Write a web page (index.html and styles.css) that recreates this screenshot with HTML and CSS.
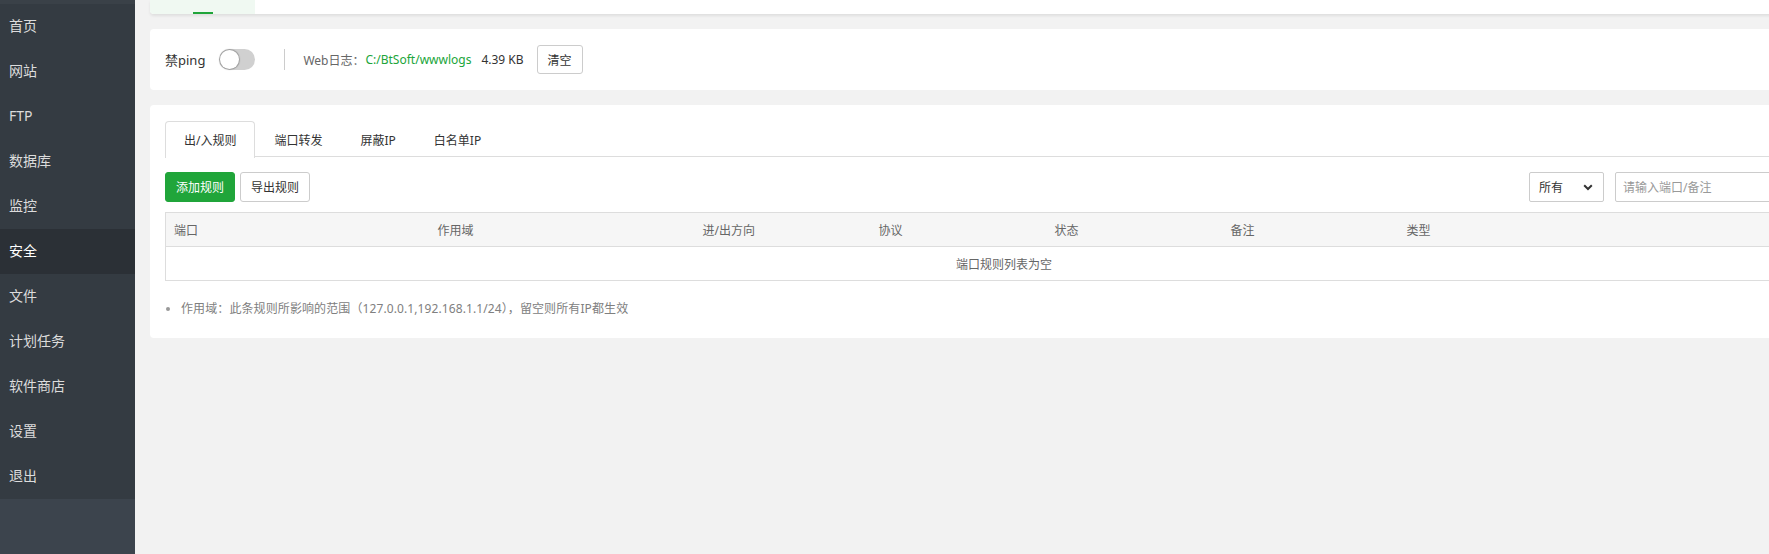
FILE: index.html
```html
<!DOCTYPE html>
<html lang="zh-CN">
<head>
<meta charset="utf-8">
<title>安全</title>
<link rel="stylesheet" href="styles.css">
</head>
<body>
<div class="app">
  <aside class="sidebar">
    <div class="sidebar-top"></div>
    <ul class="menu">
      <li class="menu-item">首页</li>
      <li class="menu-item">网站</li>
      <li class="menu-item">FTP</li>
      <li class="menu-item">数据库</li>
      <li class="menu-item">监控</li>
      <li class="menu-item active">安全</li>
      <li class="menu-item">文件</li>
      <li class="menu-item">计划任务</li>
      <li class="menu-item">软件商店</li>
      <li class="menu-item">设置</li>
      <li class="menu-item">退出</li>
    </ul>
  </aside>
  <main class="main">
    <div class="top-card">
      <div class="top-tab"><span class="top-tab-line"></span></div>
    </div>

    <section class="card ping-card">
      <span class="ping-label">禁ping</span>
      <span class="toggle"><span class="toggle-knob"></span></span>
      <span class="divider"></span>
      <span class="log-label">Web日志：</span>
      <span class="log-path">C:/BtSoft/wwwlogs</span>
      <span class="log-size">4.39 KB</span>
      <button class="btn btn-default btn-clear">清空</button>
    </section>

    <section class="card rules-card">
      <div class="tabs">
        <div class="tab active">出/入规则</div>
        <div class="tab">端口转发</div>
        <div class="tab">屏蔽IP</div>
        <div class="tab">白名单IP</div>
      </div>
      <div class="toolbar">
        <div class="toolbar-left">
          <button class="btn btn-success">添加规则</button>
          <button class="btn btn-default">导出规则</button>
        </div>
        <div class="toolbar-right">
          <div class="select">
            <span>所有</span>
            <svg class="chev" width="10" height="7" viewBox="0 0 10 7"><path d="M1.2 1.3 L5 5 L8.8 1.3" fill="none" stroke="#333" stroke-width="2"/></svg>
          </div>
          <input class="search" type="text" placeholder="请输入端口/备注">
        </div>
      </div>
      <table class="table">
        <colgroup>
          <col class="c-w264"><col class="c-w265"><col class="c-w176"><col class="c-w176"><col class="c-w176"><col class="c-w176"><col class="c-w176"><col class="c-w268">
        </colgroup>
        <thead>
          <tr>
            <th>端口</th><th>作用域</th><th>进/出方向</th><th>协议</th><th>状态</th><th>备注</th><th>类型</th><th></th>
          </tr>
        </thead>
        <tbody>
          <tr><td colspan="8" class="empty">端口规则列表为空</td></tr>
        </tbody>
      </table>
      <ul class="hints">
        <li>作用域：此条规则所影响的范围（127.0.0.1,192.168.1.1/24），留空则所有IP都生效</li>
      </ul>
    </section>
  </main>
</div>
</body>
</html>
```

FILE: styles.css
```css
* { box-sizing: border-box; }
html, body {
  margin: 0;
  padding: 0;
  width: 1769px;
  height: 554px;
  overflow: hidden;
  background: #f2f2f2;
  font-family: "Noto Sans", "Noto Sans CJK SC", sans-serif;
  font-size: 12px;
  color: #333;
}
.app {
  display: flex;
  width: 1872px;
  height: 554px;
}
.sidebar {
  width: 135px;
  flex: none;
  background: #3c444d;
  height: 554px;
}
.sidebar-top {
  height: 4px;
  background: #3a4148;
}
.menu {
  list-style: none;
  margin: 0;
  padding: 0;
  background: #343b42;
}
.menu-item {
  height: 45px;
  line-height: 43px;
  padding-left: 9px;
  font-size: 14px;
  color: #dcdcdc;
}
.menu-item.active {
  background: #2b3036;
  color: #fff;
}
.main {
  flex: 1;
  padding: 0 15px;
}
.top-card {
  height: 14px;
  background: #fff;
  border-radius: 0 0 4px 4px;
  box-shadow: 0 2px 3px rgba(0,0,0,0.08);
  display: flex;
}
.top-tab {
  width: 105px;
  background: #f0f9f2;
  display: flex;
  align-items: flex-end;
  justify-content: center;
  border-bottom-left-radius: 4px;
}
.top-tab-line {
  width: 20px;
  height: 2px;
  background: #20a53a;
}
.card {
  background: #fff;
  border-radius: 4px;
  margin-top: 15px;
}
.ping-card {
  height: 61px;
  padding: 0 15px;
  display: flex;
  align-items: center;
}
.ping-label {
  font-size: 13px;
  color: #333;
}
.toggle {
  width: 36px;
  height: 21px;
  border-radius: 11px;
  background: #d0d0d0;
  margin-left: 14px;
  display: flex;
  align-items: center;
  padding-left: 1px;
}
.toggle-knob {
  width: 19px;
  height: 19px;
  border-radius: 50%;
  background: #fff;
  box-shadow: 0 0 1px 1px rgba(0,0,0,0.25);
}
.divider {
  width: 1px;
  height: 21px;
  background: #ccc;
  margin: 0 18px 0 29px;
}
.log-label { color: #666; }
.log-path { color: #20a53a; margin-left: 1px; }
.log-size { color: #333; margin-left: 10px; }
.btn {
  height: 30px;
  padding: 0 13px;
  font-family: inherit;
  font-size: 12px;
  border-radius: 3px;
  border: 1px solid #ccc;
  background: #fff;
  color: #333;
  cursor: pointer;
}
.btn-clear {
  margin-left: 13px;
  height: 29px;
  padding: 0 10px;
}
.btn-success {
  background: #20a53a;
  border-color: #20a53a;
  color: #fff;
}
.rules-card {
  padding: 16px 15px 19px;
}
.tabs {
  display: flex;
  height: 36px;
  border-bottom: 1px solid #ddd;
}
.tab {
  height: 36px;
  padding: 2px 18px 0;
  line-height: 33px;
  border: 1px solid transparent;
  border-bottom: none;
  color: #333;
  font-size: 12px;
}
.tab.active {
  border-color: #ddd;
  border-radius: 4px 4px 0 0;
  background: #fff;
  height: 37px;
}
.toolbar {
  display: flex;
  justify-content: space-between;
  align-items: center;
  margin-top: 15px;
  width: 1677px;
}
.toolbar-left {
  display: flex;
  gap: 5px;
}
.toolbar-left .btn { width: 70px; padding: 0; }
.toolbar-right {
  display: flex;
  gap: 11px;
}
.select {
  width: 75px;
  height: 30px;
  border: 1px solid #ccc;
  border-radius: 2px;
  display: flex;
  align-items: center;
  justify-content: space-between;
  padding: 0 10px 0 9px;
  font-size: 12px;
  color: #333;
}
.search {
  width: 227px;
  height: 30px;
  border: 1px solid #ccc;
  border-radius: 2px;
  padding: 0 7px;
  font-family: inherit;
  font-size: 12px;
  outline: none;
}
.search::placeholder { color: #999; }
.table {
  margin-top: 10px;
  width: 1677px;
  border-collapse: collapse;
  table-layout: fixed;
  border: 1px solid #ddd;
}
.c-w264 { width: 264px; }
.c-w265 { width: 265px; }
.c-w176 { width: 176px; }
.c-w268 { width: 268px; }
.table th {
  height: 34px;
  padding: 0 8px;
  background: #f6f6f6;
  color: #666;
  font-weight: normal;
  text-align: left;
  border-bottom: 1px solid #ddd;
}
.table td {
  height: 34px;
  padding: 0 8px;
  color: #666;
}
.table td.empty { text-align: center; }
.hints {
  margin: 18px 0 0;
  padding-left: 16px;
  color: #808080;
  list-style: disc;
}
.hints li {
  line-height: 20px;
  letter-spacing: 0.1px;
}
.hints li::marker { color: #999; }
```
